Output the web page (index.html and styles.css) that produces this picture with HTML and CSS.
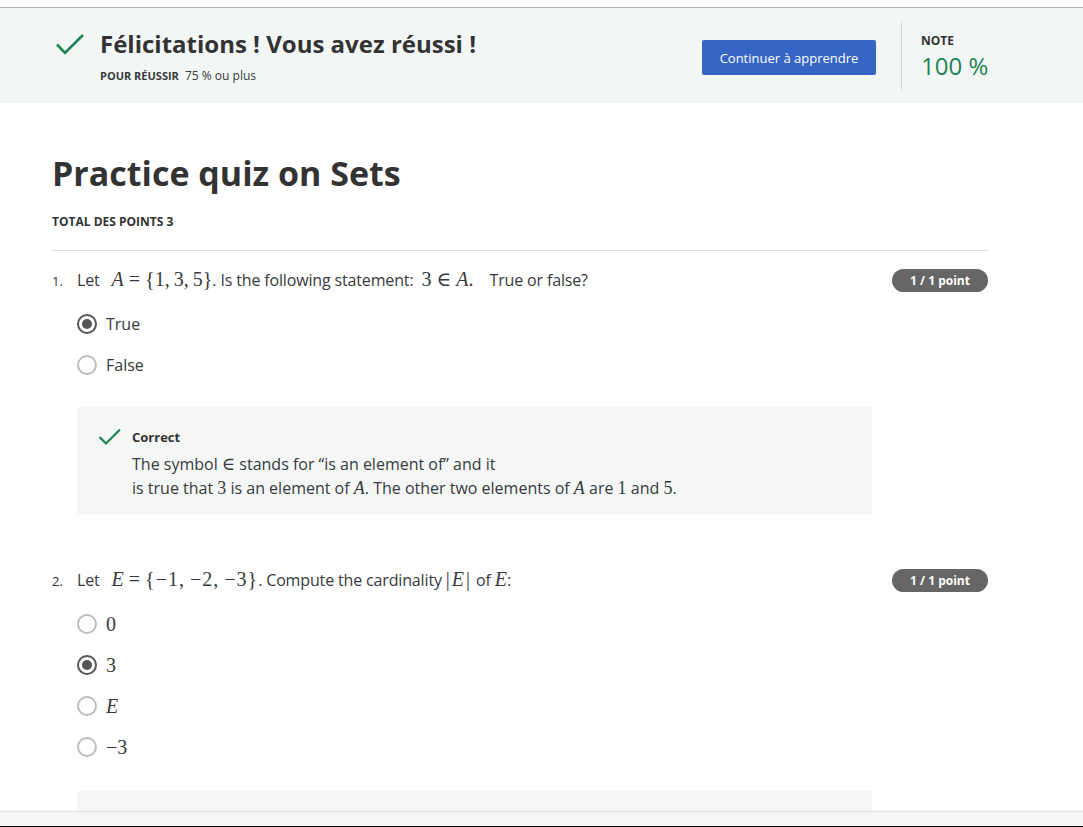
FILE: index.html
```html
<!DOCTYPE html>
<html lang="fr">
<head>
<meta charset="utf-8">
<title>Practice quiz on Sets</title>
<link rel="stylesheet" href="styles.css">
</head>
<body>
<div class="page">
  <div class="topstrip"></div>
  <header class="banner">
    <div class="banner-left">
      <svg class="check-big" width="30" height="24" viewBox="0 0 30 24"><path d="M2 11.5 L10 20 L28 2" fill="none" stroke="#1f8354" stroke-width="2.6"/></svg>
      <div class="banner-text">
        <h2 class="congrats">Félicitations ! Vous avez réussi !</h2>
        <div class="pass"><span class="pass-label">POUR RÉUSSIR</span> 75 % ou plus</div>
      </div>
    </div>
    <button class="btn">Continuer à apprendre</button>
    <div class="grade">
      <div class="grade-label">NOTE</div>
      <div class="grade-value">100 %</div>
    </div>
  </header>
  <main class="main">
    <h1 class="title">Practice quiz on Sets</h1>
    <div class="total">TOTAL DES POINTS 3</div>
    <hr class="sep">

    <section class="question">
      <div class="q-head">
        <span class="q-num">1.</span>
        <div class="q-text">Let <span class="m mi lead">A</span><span class="m op">=</span><span class="m">{1,&thinsp;3,&thinsp;5}</span>. Is the following statement: <span class="m lead2">3</span><span class="m op">∈</span><span class="m mi">A</span><span class="m">.</span><span class="gap"></span>True or false?</div>
        <span class="badge">1 / 1 point</span>
      </div>
      <div class="options">
        <div class="opt"><span class="radio checked"></span><span class="opt-label">True</span></div>
        <div class="opt"><span class="radio"></span><span class="opt-label">False</span></div>
      </div>
      <div class="feedback">
        <svg class="check-small" width="24" height="18" viewBox="0 0 24 18"><path d="M1.5 9 L8 15.5 L22 1.5" fill="none" stroke="#1f8354" stroke-width="2.2"/></svg>
        <div class="fb-body">
          <div class="fb-title">Correct</div>
          <p class="fb-text">The symbol <span class="m sm">∈</span> stands for “is an element of” and it<br>is true that <span class="m sm">3</span> is an element of <span class="m sm mi">A</span>. The other two elements of <span class="m sm mi">A</span> are <span class="m sm">1</span> and <span class="m sm">5</span>.</p>
        </div>
      </div>
    </section>

    <section class="question q2">
      <div class="q-head">
        <span class="q-num">2.</span>
        <div class="q-text">Let <span class="m mi lead">E</span><span class="m op">=</span><span class="m neg">{−1,&thinsp;−2,&thinsp;−3}</span>. Compute the cardinality <span class="m abs">|<span class="mi">E</span>|</span> of <span class="m mi">E</span>:</div>
        <span class="badge">1 / 1 point</span>
      </div>
      <div class="options">
        <div class="opt"><span class="radio"></span><span class="m">0</span></div>
        <div class="opt"><span class="radio checked"></span><span class="m">3</span></div>
        <div class="opt"><span class="radio"></span><span class="m mi">E</span></div>
        <div class="opt"><span class="radio"></span><span class="m">−3</span></div>
      </div>
      <div class="feedback fb2">
        <svg class="check-small" width="24" height="18" viewBox="0 0 24 18"><path d="M1.5 9 L8 15.5 L22 1.5" fill="none" stroke="#1f8354" stroke-width="2.2"/></svg>
      </div>
    </section>
  </main>
  <footer class="footer"></footer>
</div>
</body>
</html>
```
FILE: styles.css
```css
* { box-sizing: border-box; }
html, body { margin: 0; padding: 0; }
body {
  font-family: "Open Sans", "Noto Sans", sans-serif;
  color: #333;
  background: #fff;
}
.page {
  height: 827px;
  display: flex;
  flex-direction: column;
  overflow: hidden;
}
.topstrip {
  height: 8px;
  flex: none;
  border-bottom: 1px solid #b3b3b3;
}
.banner {
  flex: none;
  height: 95px;
  background: #f2f7f6;
  display: flex;
  align-items: center;
  padding-left: 55px;
}
.banner-left {
  display: flex;
  align-items: flex-start;
  width: 647px;
}
.check-big { margin-top: 5px; margin-right: 15px; }
.congrats {
  margin: 0;
  font-size: 24px;
  font-weight: 700;
  line-height: 32px;
  color: #333;
}
.pass {
  margin-top: 7px;
  font-size: 12px;
  color: #373a3c;
}
.pass-label { font-weight: 700; font-size: 11px; margin-right: 3px; }
.btn {
  width: 174px;
  height: 35px;
  border: none;
  border-radius: 2px;
  background: #3565c5;
  color: #fff;
  font-family: "Open Sans", sans-serif;
  font-size: 13px;
  padding: 0;
  margin-top: 4px;
}
.grade {
  margin-left: 25px;
  height: 68px;
  border-left: 1px solid #d6d6d6;
  padding-left: 19px;
  padding-top: 11px;
}
.grade-label { font-size: 12px; font-weight: 700; color: #333; line-height: 16px; }
.grade-value { font-size: 24px; color: #1f8354; line-height: 33px; }

.main {
  flex: 1;
  overflow: hidden;
  padding: 0 95px 0 52px;
}
.title {
  margin: 48px 0 0;
  font-size: 34px;
  font-weight: 700;
  line-height: 44px;
  color: #333;
}
.total {
  margin-top: 18px;
  font-size: 12px;
  font-weight: 700;
  color: #333;
}
.sep {
  margin: 20px 0 0;
  border: none;
  border-top: 1px solid #dcdcdc;
}
.question { margin-top: 17px; }
.q2 { margin-top: 53px; }
.q-head {
  display: flex;
  align-items: center;
  height: 25px;
}
.q-num { width: 25px; font-size: 13px; color: #333; }
.q-text { flex: 1; font-size: 16px; line-height: 25px; color: #373a3c; letter-spacing: -0.15px; }
.badge {
  background: #666;
  color: #fff;
  font-size: 12px;
  font-weight: 700;
  border-radius: 12px;
  width: 96px;
  height: 23px;
  line-height: 23px;
  text-align: center;
}
.m { font-family: "Liberation Serif", "DejaVu Serif", serif; font-size: 20px; line-height: 1; letter-spacing: 0; }
.m.sm { font-size: 18px; }
.mi { font-style: italic; }
.lead { margin-left: 8px; }
.lead2 { margin-left: 4px; }
.op { margin: 0 5px; }
.neg { letter-spacing: 1px; }
.abs { letter-spacing: 2px; }
.gap { display: inline-block; width: 16px; }
.options { margin-top: 10px; padding-left: 25px; }
.opt {
  display: flex;
  align-items: center;
  height: 41px;
  font-size: 16px;
  color: #373a3c;
}
.radio {
  width: 20px;
  height: 20px;
  border-radius: 50%;
  border: 2px solid #bdbdbd;
  margin-right: 9px;
  position: relative;
}
.radio.checked { border-color: #555; }
.radio.checked::after {
  content: "";
  position: absolute;
  left: 3px; top: 3px;
  width: 10px; height: 10px;
  border-radius: 50%;
  background: #555;
}
.feedback {
  margin: 22px 0 0 25px;
  width: 795px;
  background: #f5f7f7;
  padding: 21px 20px 15px 21px;
  display: flex;
  align-items: flex-start;
}
.fb2 { margin-top: 24px; }
.check-small { margin-top: 0; margin-right: 10px; flex: none; }
.fb-title { font-size: 13px; font-weight: 700; color: #333; line-height: 18px; }
.fb-text { margin: 6px 0 0; font-size: 16px; line-height: 24px; color: #373a3c; }
.footer {
  flex: none;
  height: 16px;
  background: #f7f7f7;
  border-top: 1px solid #e0e0e0;
  border-bottom: 1px solid #000;
}
```
